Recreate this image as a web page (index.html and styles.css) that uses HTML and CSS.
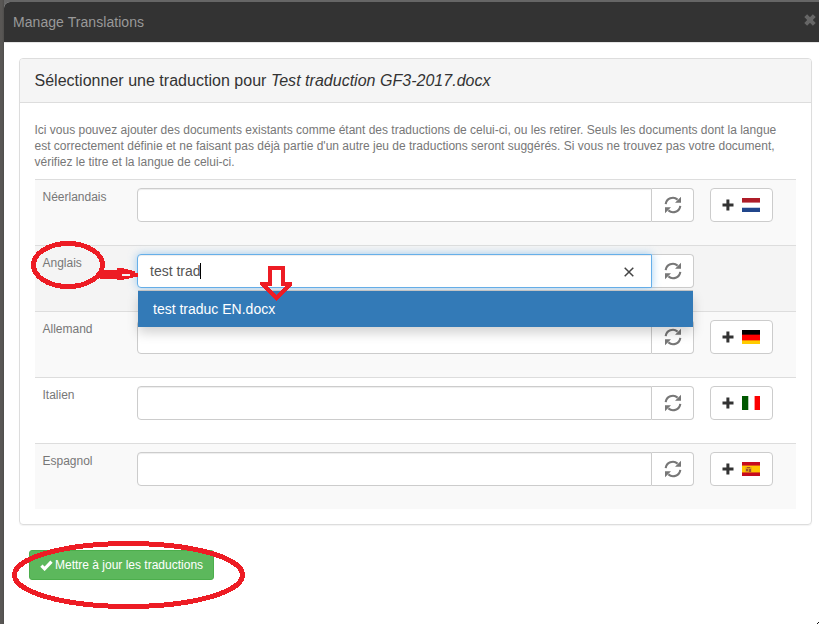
FILE: index.html
```html
<!DOCTYPE html>
<html lang="fr">
<head>
<meta charset="utf-8">
<title>Manage Translations</title>
<link rel="stylesheet" href="styles.css">
</head>
<body>
<svg class="defs" aria-hidden="true">
  <symbol id="refresh" viewBox="0 0 18 18">
    <path d="M1.700 8.200A7.200 7.200 0 0 1 13.600 3.600M16.300 9.800A7.200 7.200 0 0 1 4.400 14.400" fill="none" stroke="currentColor" stroke-width="2.100"/>
    <path d="M17 .8V6.700H11zM1 17.200V11.300H7z" fill="currentColor"/>
  </symbol>
  <symbol id="plus" viewBox="0 0 12 12">
    <path d="M4.400.5h3v4.100h4.100v2.900H7.400v4h-3v-4H.5V4.600h3.900z" fill="currentColor"/>
  </symbol>
</svg>
<div class="modal">
  <header class="modal-header">
    <span class="modal-title">Manage Translations</span>
    <svg class="close" viewBox="0 0 12 12"><path d="M1.700 1.700l8.600 8.600M10.300 1.700l-8.600 8.600" stroke="currentColor" stroke-width="4"/></svg>
  </header>
  <main class="modal-body">
    <section class="panel">
      <h1 class="panel-heading">Sélectionner une traduction pour <em>Test traduction GF3-2017.docx</em></h1>
      <div class="panel-body">
        <p class="help">Ici vous pouvez ajouter des documents existants comme étant des traductions de celui-ci, ou les retirer. Seuls les documents dont la langue<br>est correctement définie et ne faisant pas déjà partie d'un autre jeu de traductions seront suggérés. Si vous ne trouvez pas votre document,<br>vérifiez le titre et la langue de celui-ci.</p>
        <div class="row odd">
          <span class="label">Néerlandais</span>
          <div class="group"><div class="field"></div><div class="addon"><svg class="sync"><use href="#refresh"/></svg></div></div>
          <div class="add"><svg class="plus"><use href="#plus"/></svg><svg class="flag" viewBox="0 0 18 14"><path fill="#ae1c28" d="M0 0h18v4H0z"/><path fill="#cf7880" d="M0 4h18v1H0z"/><path fill="#fff" d="M0 5h18v4H0z"/><path fill="#c4cde2" d="M0 9h18v1H0z"/><path fill="#21468b" d="M0 10h18v4H0z"/></svg></div>
        </div>
        <div class="row hover">
          <span class="label">Anglais</span>
          <div class="group">
            <div class="field focus"><span class="typed">test trad</span><span class="caret"></span><svg class="clear" viewBox="0 0 10 10"><path d="M.7.7l8.600 8.600M9.300.7L.7 9.300" stroke="currentColor" stroke-width="1.500"/></svg></div>
            <div class="addon"><svg class="sync"><use href="#refresh"/></svg></div>
            <div class="menu">test traduc EN.docx</div>
          </div>
        </div>
        <div class="row odd">
          <span class="label">Allemand</span>
          <div class="group"><div class="field"></div><div class="addon"><svg class="sync"><use href="#refresh"/></svg></div></div>
          <div class="add"><svg class="plus"><use href="#plus"/></svg><svg class="flag" viewBox="0 0 18 14"><path d="M0 0h18v5H0z"/><path fill="#f00" d="M0 5h18v5H0z"/><path fill="#5a0000" d="M0 4h18v1H0z"/><path fill="#ff8000" d="M0 10h18v1H0z"/><path fill="#fc0" d="M0 11h18v3H0z"/></svg></div>
        </div>
        <div class="row">
          <span class="label">Italien</span>
          <div class="group"><div class="field"></div><div class="addon"><svg class="sync"><use href="#refresh"/></svg></div></div>
          <div class="add"><svg class="plus"><use href="#plus"/></svg><svg class="flag" viewBox="0 0 18 14"><path fill="#fff" d="M0 0h18v14H0z"/><path fill="#005700" d="M0 0h6v14H0z"/><path fill="#b5cfb5" d="M6 0h1v14H6z"/><path fill="#fc9999" d="M12 0h1v14h-1z"/><path fill="#fc0000" d="M13 0h5v14h-5z"/></svg></div>
        </div>
        <div class="row odd">
          <span class="label">Espagnol</span>
          <div class="group"><div class="field"></div><div class="addon"><svg class="sync"><use href="#refresh"/></svg></div></div>
          <div class="add"><svg class="plus"><use href="#plus"/></svg><svg class="flag" viewBox="0 0 18 14"><path fill="#c60b1e" d="M0 0h18v14H0z"/><path fill="#ffc400" d="M0 4h18v6.500H0z"/><path fill="#e05a14" d="M0 3h18v1H0zM0 10h18v1H0z"/><path fill="#d99a20" d="M3.500 5h6v5h-6z"/><path fill="#a0522d" d="M5 5h3v1H5zM4 7h2v2H4zM7 7h2v3H7z"/></svg></div>
        </div>
      </div>
    </section>
    <div class="submit"><svg class="check" viewBox="0 0 13 11"><path d="M1.400 5.600l3.200 3.200L11.500 1.600" fill="none" stroke="currentColor" stroke-width="3.200"/></svg><span>Mettre à jour les traductions</span></div>
  </main>
</div>
<svg class="marks" viewBox="0 0 819 624" aria-hidden="true">
  <g fill="none" stroke="#ed1c24" stroke-width="5">
    <ellipse cx="68" cy="265" rx="34.500" ry="21.500"/>
    <ellipse cx="128.500" cy="575" rx="114" ry="31.500"/>
  </g>
  <path fill="#ed1c24" fill-rule="evenodd" d="M100 270h17v-2h7v1h4v1h4v1h3v2h3v4h-5v1h-4v1h-5v1h-7v-1h-17zM122 274v2h8v-2z"/>
  <path fill="#ed1c24" fill-rule="evenodd" d="M268 266h17v16h7v3L276.500 301 260 285v-3h8zM272 270v16h-5l9.500 9 9.500-9h-5V270z"/>
  <path fill="#111" d="M818 622h1v1h-1zM817 623h1v1h-1z"/>
</svg>
</body>
</html>
```

FILE: styles.css
```css
* { box-sizing: border-box; }
body {
  margin: 0;
  height: 624px;
  overflow: hidden;
  padding: 2px 0 0 4px;
  background: linear-gradient(90deg, #595755 0, #595755 2px, #4e4d4b 4px, #666 4px);
  font: 12px/16px "Liberation Sans", Arial, sans-serif;
  color: #777;
}
.defs { position: absolute; width: 0; height: 0; }
.modal { height: 622px; background: #fff; border-top-left-radius: 6px; overflow: hidden; }
.modal-header {
  display: flex;
  justify-content: space-between;
  align-items: center;
  height: 41px;
  padding: 0 3px 1px 9px;
  background: #333;
  border-bottom: 1px solid #e5e5e5;
  color: #999;
}
.modal-title { font-size: 14px; line-height: 20px; letter-spacing: .06px; }
.close { width: 12px; height: 12px; color: #666; margin-bottom: 3px; }
.modal-body { padding: 15px 7px 0 15px; }
.panel { height: 467px; border: 1px solid #ddd; border-radius: 4px; box-shadow: 0 1px 1px rgba(0,0,0,.05); }
.panel-heading {
  margin: 0;
  height: 44px;
  padding: 12px 15px 12px 14.5px;
  border-bottom: 1px solid #ddd;
  border-radius: 3px 3px 0 0;
  background: #f5f5f5;
  color: #333;
  font-size: 16px;
  line-height: 19px;
  font-weight: 400;
  letter-spacing: .02px;
  white-space: nowrap;
}
.panel-body { padding: 19px 15px 0; }
.help { margin: 0 0 9px -.5px; white-space: nowrap; }
.row {
  display: flex;
  gap: 16px;
  height: 66px;
  padding: 8px;
  border-top: 1px solid #ddd;
}
.odd { background: #f9f9f9; }
.hover { background: #f4f4f4; }
.label { width: 78px; padding-top: 1px; text-indent: -.5px; }
.group { position: relative; display: flex; width: 557px; height: 34px; }
.field {
  display: flex;
  align-items: center;
  width: 515px;
  padding: 0 17px 0 12px;
  border: 1px solid #ccc;
  border-radius: 4px 0 0 4px;
  background: #fff;
  box-shadow: inset 0 1px 1px rgba(0,0,0,.075);
  font-size: 14px;
  color: #555;
}
.focus { position: relative; z-index: 1; border-color: #66afe9; box-shadow: inset 0 1px 1px rgba(0,0,0,.075), 0 0 8px rgba(102,175,233,.6); }
.caret { width: 1px; height: 16px; margin-left: -1px; background: #000; }
.clear { width: 10px; height: 10px; margin-left: auto; margin-top: 2px; color: #444; }
.addon {
  display: flex;
  justify-content: center;
  align-items: center;
  width: 42px;
  border: 1px solid #ccc;
  border-left: 0;
  border-radius: 0 4px 4px 0;
  background: #fff;
}
.sync { width: 18px; height: 18px; color: #777; }
.menu {
  position: absolute;
  z-index: 2;
  left: 1px;
  top: 37px;
  width: 555px;
  height: 36px;
  padding: 8px 15px;
  background: #337ab7;
  box-shadow: 0 6px 12px rgba(0,0,0,.175), 0 -1px 0 #c8c8c8;
  color: #fff;
  font-size: 14px;
  line-height: 20px;
}
.add {
  display: flex;
  align-items: center;
  gap: 8px;
  width: 63px;
  height: 34px;
  padding-left: 11px;
  border: 1px solid #ccc;
  border-radius: 4px;
  background: #fff;
  color: #333;
}
.plus { width: 12px; height: 12px; margin-top: -1px; }
.flag { width: 18px; height: 14px; }
.submit {
  display: flex;
  align-items: center;
  gap: 2px;
  width: 185px;
  height: 30px;
  margin: 25px 0 0 10px;
  padding: 0 9px 0 10px;
  border: 1px solid #4cae4c;
  border-radius: 3px;
  background: #5cb85c;
  color: #fff;
  white-space: nowrap;
}
.check { width: 13px; height: 11px; flex: none; }
.marks { position: absolute; z-index: 3; left: 0; top: 0; width: 819px; height: 624px; pointer-events: none; shape-rendering: crispEdges; }
```
